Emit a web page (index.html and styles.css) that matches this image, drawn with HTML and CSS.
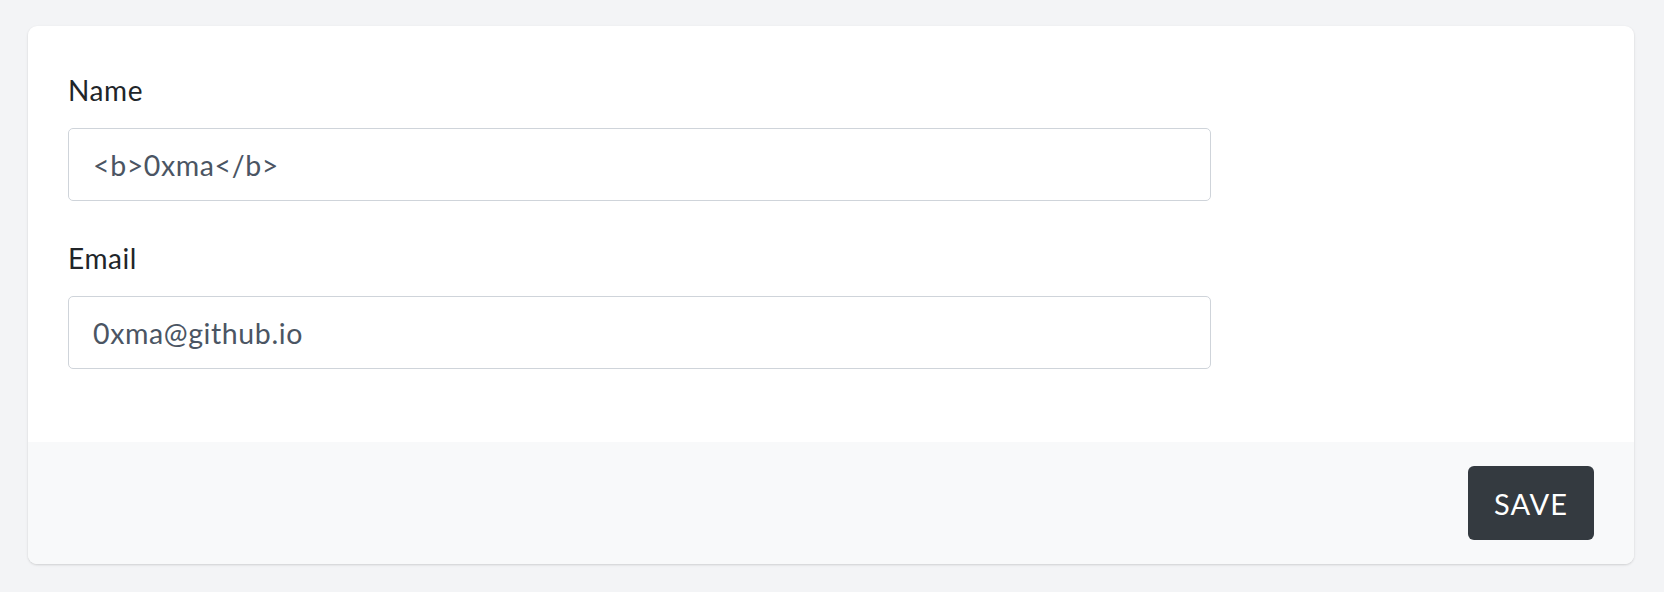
FILE: index.html
```html
<!DOCTYPE html>
<html lang="en">
<head>
<meta charset="utf-8">
<title>Profile</title>
<link rel="stylesheet" href="styles.css">
</head>
<body>
<form class="card">
  <div class="card-body">
    <div class="field">
      <label class="label" for="name">Name</label>
      <input class="input" id="name" type="text" value="&lt;b&gt;0xma&lt;/b&gt;">
    </div>
    <div class="field">
      <label class="label" for="email">Email</label>
      <input class="input" id="email" type="email" value="0xma@github.io">
    </div>
  </div>
  <div class="card-footer">
    <button class="btn" type="button">Save</button>
  </div>
</form>
</body>
</html>
```
FILE: styles.css
```css
html, body {
  margin: 0;
  padding: 0;
}
body {
  background: #f3f4f6;
  font-family: "Lato", "Noto Sans", sans-serif;
  color: #212529;
  padding: 26px 30px 28px 28px;
  box-sizing: border-box;
  width: 1664px;
  height: 592px;
}
.card {
  display: flex;
  flex-direction: column;
  background: #ffffff;
  border-radius: 9px;
  box-shadow: 0 1px 3px rgba(0, 0, 0, 0.1), 0 1px 2px rgba(0, 0, 0, 0.06);
  overflow: hidden;
  width: 1606px;
  height: 538px;
  margin: 0;
}
.card-body {
  padding: 45px 40px 0;
  flex: 1;
}
.field {
  margin-bottom: 38px;
}
.label {
  display: block;
  font-size: 28px;
  line-height: 39px;
  letter-spacing: 0.6px;
  margin-bottom: 18px;
  color: #212529;
}
.input {
  display: block;
  box-sizing: border-box;
  width: 1143px;
  height: 73px;
  padding: 0 24px;
  font-family: inherit;
  font-size: 28.5px;
  letter-spacing: 0.6px;
  color: #4b5563;
  background: #fff;
  border: 1px solid #cfd4da;
  border-radius: 5px;
  outline: none;
}
.card-footer {
  background: #f8f9fa;
  height: 122px;
  flex: none;
  box-sizing: border-box;
  padding: 24px 40px;
  display: flex;
  justify-content: flex-end;
  align-items: center;
}
.btn {
  width: 126px;
  height: 74px;
  border: 0;
  border-radius: 6px;
  background: #343a40;
  color: #ffffff;
  font-family: inherit;
  font-size: 29px;
  letter-spacing: 1px;
  text-transform: uppercase;
  padding: 0;
}
```
